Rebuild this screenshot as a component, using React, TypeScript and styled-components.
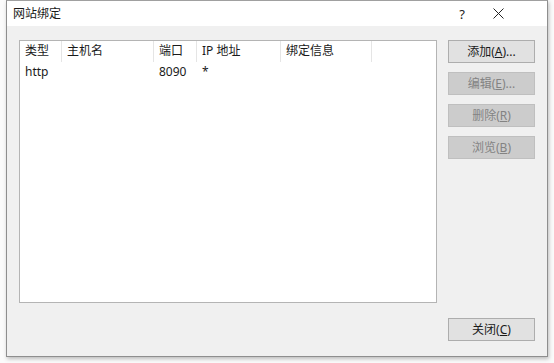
import React from 'react'
import styled, { createGlobalStyle } from 'styled-components'

const GlobalStyle = createGlobalStyle`
  html, body {
    margin: 0;
    padding: 0;
    background: #fbfbfb;
    overflow: hidden;
  }
  body {
    font-family: 'Noto Sans', 'Noto Sans CJK SC', sans-serif;
    font-size: 12px;
    color: #000;
  }
`

const columns = [
  { label: '类型', width: 42 },
  { label: '主机名', width: 92 },
  { label: '端口', width: 43 },
  { label: 'IP 地址', width: 84 },
  { label: '绑定信息', width: 91 },
]

const rows = [['http', '', '8090', '*', '']]

const Desktop = styled.div`
  width: 554px;
  height: 363px;
  position: relative;
`

const Dialog = styled.div`
  position: absolute;
  left: 6px;
  top: 0;
  width: 542px;
  height: 357px;
  box-sizing: border-box;
  border: 1px solid #8e8e8e;
  border-top-color: #a0a0a0;
  background: #f0f0f0;
  box-shadow: 1px 2px 4px rgba(0, 0, 0, 0.25);
  display: flex;
  flex-direction: column;
`

const TitleBar = styled.div`
  height: 25px;
  background: #fff;
  display: flex;
  align-items: center;
  padding: 0 31px 0 6px;
`

const Title = styled.span`
  flex: 1;
  font-size: 12px;
  line-height: 16px;
  margin-top: 1px;
  color: #1a1a1a;
`

const TitleButton = styled.div`
  width: 36px;
  height: 25px;
  display: flex;
  align-items: center;
  justify-content: center;
  font-size: 13px;
  color: #222;
`

const Body = styled.div`
  flex: 1;
  padding: 14px 12px 0 12px;
  display: flex;
  flex-direction: column;
`

const MainRow = styled.div`
  display: flex;
  gap: 11px;
`

const ListBox = styled.div`
  width: 418px;
  height: 263px;
  box-sizing: border-box;
  border: 1px solid #b4b4b4;
  background: #fff;
`

const HeaderRow = styled.div`
  display: flex;
  height: 21px;
`

const HeaderCell = styled.div<{ $w: number }>`
  width: ${(p) => p.$w}px;
  box-sizing: border-box;
  padding-left: 5px;
  border-right: 1px solid #e5e5e5;
  line-height: 19px;
  white-space: nowrap;
  color: #1a1a1a;
`

const DataRow = styled.div`
  display: flex;
  height: 17px;
  margin-top: 1px;
`

const DataCell = styled.div<{ $w: number }>`
  width: ${(p) => p.$w}px;
  box-sizing: border-box;
  padding-left: 5px;
  line-height: 17px;
  white-space: nowrap;
  color: #1a1a1a;
`

const ButtonColumn = styled.div`
  display: flex;
  flex-direction: column;
  gap: 9px;
`

const Button = styled.div<{ $disabled?: boolean }>`
  width: 87px;
  height: 23px;
  box-sizing: border-box;
  border: 1px solid ${(p) => (p.$disabled ? '#bfbfbf' : '#adadad')};
  background: ${(p) => (p.$disabled ? '#cccccc' : '#e1e1e1')};
  color: ${(p) => (p.$disabled ? '#838383' : '#1a1a1a')};
  display: flex;
  align-items: center;
  justify-content: center;
  font-size: 12px;
  line-height: 16px;
  u {
    text-decoration: underline;
    text-underline-offset: 1px;
  }
`

const Footer = styled.div`
  display: flex;
  justify-content: flex-end;
  margin-top: 15px;
`

const CloseIcon = () => (
  <svg width="11" height="11" viewBox="0 0 11 11">
    <path d="M0.5 0.5 L10.5 10.5 M10.5 0.5 L0.5 10.5" stroke="#222" strokeWidth="1" />
  </svg>
)

export default function App() {
  return (
    <Desktop>
      <GlobalStyle />
      <Dialog>
        <TitleBar>
          <Title>网站绑定</Title>
          <TitleButton>?</TitleButton>
          <TitleButton>
            <CloseIcon />
          </TitleButton>
        </TitleBar>
        <Body>
          <MainRow>
            <ListBox>
              <HeaderRow>
                {columns.map((c) => (
                  <HeaderCell key={c.label} $w={c.width}>
                    {c.label}
                  </HeaderCell>
                ))}
              </HeaderRow>
              {rows.map((r, i) => (
                <DataRow key={i}>
                  {r.map((v, j) => (
                    <DataCell key={j} $w={columns[j].width}>
                      {v}
                    </DataCell>
                  ))}
                </DataRow>
              ))}
            </ListBox>
            <ButtonColumn>
              <Button>
                添加(<u>A</u>)...
              </Button>
              <Button $disabled>
                编辑(<u>E</u>)...
              </Button>
              <Button $disabled>
                删除(<u>R</u>)
              </Button>
              <Button $disabled>
                浏览(<u>B</u>)
              </Button>
            </ButtonColumn>
          </MainRow>
          <Footer>
            <Button>
              关闭(<u>C</u>)
            </Button>
          </Footer>
        </Body>
      </Dialog>
    </Desktop>
  )
}
